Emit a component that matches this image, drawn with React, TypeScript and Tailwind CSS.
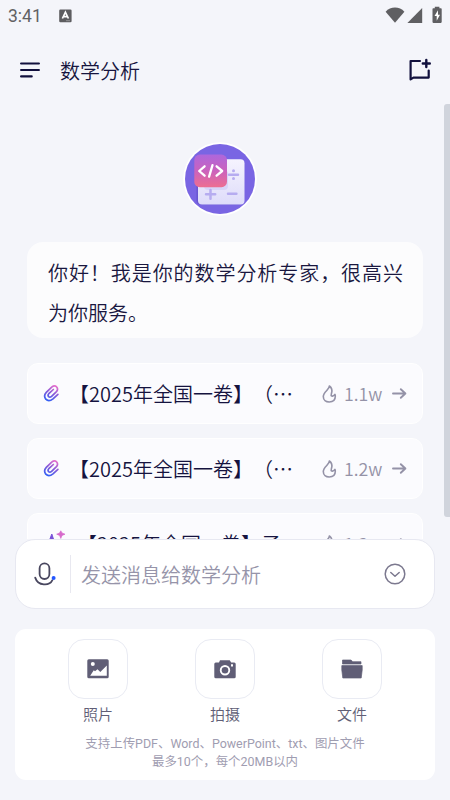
import React from "react";

const CJK = "font-['Noto_Sans_CJK_SC',sans-serif]";

function StatusBar() {
  return (
    <div className="flex h-8 shrink-0 items-center pl-2 font-['Roboto','Noto_Sans_CJK_SC',sans-serif] text-[17.5px] font-normal text-[#616163]">
      <span className="w-[51px] leading-8">3:41</span>
      <svg width="13" height="14" viewBox="0 0 13 14">
        <rect x="0.2" y="0.5" width="12.4" height="12.8" rx="1.2" fill="#5d5d60" />
        <path d="M3.4 9.5 6.4 3.2 9.4 9.5M4.6 7.6h3.6" fill="none" stroke="#fff" strokeWidth="1.7" />
        <path d="M7 11.7h4" stroke="#aaa" strokeWidth="0.7" />
      </svg>
      <svg className="ml-auto" width="65" height="20" viewBox="385 5.5 65 20" fill="#5f5f62">
        <path d="M385.6 11.2C390.5 5.7 399.5 5.7 404.4 11.2L395 22.2Z" />
        <path d="M422.2 7.5V22.4H407.4Z" />
        <path d="M434.8 6.2h4.6v1.6h1.5q.8 0 .8.8v13q0 .8-.8.8h-7.6q-.8 0-.8-.8v-13q0-.8.8-.8h1.5Z" />
        <path d="M438 9.8l-3.5 5.8h2.2v4.6l3.3-6h-2Z" fill="#fff" />
      </svg>
    </div>
  );
}

function Header() {
  return (
    <header className="flex h-[76px] shrink-0 items-center pr-[18px] pl-5">
      <svg width="20" height="16" viewBox="0 0 20 16" stroke="#11103d" strokeWidth="2.2" strokeLinecap="round">
        <path d="M1.1 1.5h17.8M1.1 8h17.8M1.1 14.4h10.6" />
      </svg>
      <h1 className="mt-px ml-5 text-[20px] leading-8 font-[350] text-[#17153f]">数学分析</h1>
      <svg className="ml-auto" width="24" height="24" viewBox="408 58 24 24" fill="none" stroke="#11103d" strokeWidth="2.2" strokeLinecap="round" strokeLinejoin="round">
        <path d="M420 61H410.6V79.4L413.4 77.6H428.7V70.6" />
        <path d="M426.3 60v7M422.8 63.5h7" strokeWidth="2.4" />
      </svg>
    </header>
  );
}

function Avatar() {
  return (
    <svg className="ml-[156px] block shrink-0" width="74" height="74" viewBox="183 142 74 74">
      <defs>
        <linearGradient id="badge" x1="0" y1="0" x2="0" y2="1">
          <stop offset="0" stopColor="#ad67dc" />
          <stop offset="0.5" stopColor="#cb62bd" />
          <stop offset="1" stopColor="#ed6e91" />
        </linearGradient>
        <linearGradient id="pad" x1="0" y1="0" x2="0" y2="1">
          <stop offset="0" stopColor="#f5f3fe" />
          <stop offset="1" stopColor="#dedcfa" />
        </linearGradient>
      </defs>
      <circle cx="220" cy="179" r="36.8" fill="#fff" />
      <circle cx="220" cy="179" r="35" fill="#7965e3" />
      <rect x="196.5" y="160" width="46" height="44.5" rx="4" fill="#6957d1" />
      <rect x="198" y="159.3" width="46.5" height="45.2" rx="4" fill="url(#pad)" />
      <rect x="204" y="170" width="24" height="20" rx="4" fill="#d8d4f8" />
      <g stroke="#b6acf0" strokeWidth="2.5" strokeLinecap="round">
        <path d="M229 174.7h9M228 193.8h8.4M206 194.3h9.2M210.5 190v8.8" />
      </g>
      <circle cx="233.5" cy="170.8" r="1.5" fill="#b6acf0" />
      <circle cx="233.5" cy="178.6" r="1.5" fill="#b6acf0" />
      <rect x="194.3" y="154.6" width="32.7" height="32.6" rx="5.5" fill="url(#badge)" />
      <path d="M204.6 166.3 199.2 171l5.4 4.7M216.6 166.3 222.2 171l-5.6 4.7M212.5 165.2l-3.4 11.4" fill="none" stroke="#fff" strokeWidth="2.3" strokeLinecap="round" strokeLinejoin="round" />
    </svg>
  );
}

function ClipIcon() {
  return (
    <svg className="shrink-0" width="17" height="19" viewBox="43 384 17 19" fill="none">
      <defs>
        <linearGradient id="clip" gradientUnits="userSpaceOnUse" x1="55" y1="385" x2="48" y2="401">
          <stop offset="0" stopColor="#ec70cb" />
          <stop offset="0.5" stopColor="#8458d8" />
          <stop offset="1" stopColor="#3160f5" />
        </linearGradient>
      </defs>
      <path d="M57.9 394.3 53 398.8Q48.8 402.2 45.8 399.2 43.2 395.8 46.3 392.4L51.7 387.2Q54.6 384.8 56.7 387 58.6 389.4 56.2 391.9L51.6 396.4Q49.9 397.8 48.6 396.6 47.4 395.3 48.8 393.7L53.3 389.5" stroke="url(#clip)" strokeWidth="1.7" strokeLinecap="round" />
    </svg>
  );
}

function SparkIcon() {
  return (
    <svg className="shrink-0" width="25" height="28" viewBox="43 530 25 28">
      <path d="M51.8 534 54.3 541.5 60 544.5 54.3 547 51.8 554 49 547 43.5 544.5 49 541.5Z" fill="#7952d8" stroke="#7952d8" />
      <path d="M60.8 530.8 62 533 65 534.2 62 535.4 60.8 538.4 59.6 535.4 56.7 534.2 59.6 533Z" fill="#d76acb" stroke="#d76acb" strokeWidth="0.7" />
    </svg>
  );
}

function Prompt({ icon, title, count }: { icon: React.ReactNode; title: string; count: string }) {
  return (
    <div className="flex h-[61px] shrink-0 items-center rounded-[11px] border border-white bg-[#fbfbfe] pr-[15px] pl-[15px]">
      {icon}
      <span className="ml-[9px] whitespace-nowrap text-[20px] leading-[30px] text-[#15133f]">{title}</span>
      <svg className="ml-auto shrink-0" width="16" height="20" viewBox="0 0 16 20" fill="none" stroke="#9492a7" strokeWidth="1.6" strokeLinejoin="round" strokeLinecap="round">
        <path d="M7.4 2C7.6 5.4 1.3 7.8 1.3 12.6 1.3 16 4 18 7.2 18 10.9 18 13.3 15.8 13.3 12.3 13.3 11.6 13.2 11 12.9 10.4 12.2 11.4 10.9 12.4 9.8 12 8.5 11.4 9.2 10.4 9.6 9.1 10.3 6.5 9.6 3.6 7.4 2Z" />
      </svg>
      <span className="mb-[2px] ml-[6px] w-[40px] whitespace-nowrap text-[17.8px] leading-[30px] text-[#9492a7]">{count}</span>
      <svg className="ml-2 shrink-0" width="15" height="14" viewBox="0 0 15 14" fill="none" stroke="#9492a7" strokeWidth="1.9" strokeLinecap="round" strokeLinejoin="round">
        <path d="M1 6.5h12.4M8.8 2.2 13.4 6.5l-4.6 4.3" />
      </svg>
    </div>
  );
}

function Composer() {
  return (
    <div className="mx-[15px] flex h-[70px] shrink-0 items-center rounded-[20px] border border-[#e7e8f1] bg-white pr-[28px] pl-[18px]">
      <svg width="23" height="26" viewBox="34 561 23 26" fill="none" stroke="#49475f" strokeWidth="1.8" strokeLinecap="round">
        <rect x="39.6" y="563.4" width="9.8" height="15.6" rx="4.9" />
        <path d="M35.2 577.6C38 586.3 49.5 586.2 52.4 580.2" />
        <circle cx="53.6" cy="578" r="2" fill="#2356ff" stroke="none" />
      </svg>
      <div className="ml-[13px] h-[38px] w-px bg-[#e8e8f0]" />
      <span className="mt-px ml-[10px] text-[20px] leading-[30px] text-[#9694a9]">发送消息给数学分析</span>
      <svg className="ml-auto" width="22" height="22" viewBox="0 0 22 22" fill="none" stroke="#7c798f" strokeWidth="1.5" strokeLinecap="round" strokeLinejoin="round">
        <circle cx="11" cy="11" r="9.8" />
        <path d="M6.8 9.5 11 13.3l4.2-3.8" />
      </svg>
    </div>
  );
}

function Attach({ label, children }: { label: string; children: React.ReactNode }) {
  return (
    <div className="flex w-[60px] flex-col items-center">
      <div className="flex h-[60px] w-[60px] items-center justify-center rounded-2xl border border-[#e9ebf3] bg-white">
        <svg width="24" height="24" viewBox="0 0 24 24" fill="#605e76">{children}</svg>
      </div>
      <span className="mt-[3px] text-[15px] leading-6 text-[#605e76]">{label}</span>
    </div>
  );
}

export default function App() {
  return (
    <div lang="zh-CN" className={`flex h-[800px] w-[450px] flex-col overflow-hidden bg-[#f4f5fa] font-[350] [text-spacing-trim:space-all] ${CJK}`}>
      <StatusBar />
      <Header />
      <main className="relative -mt-1 flex h-[435px] shrink-0 flex-col overflow-hidden px-[27px] pt-[38px]">
        <Avatar />
        <p className="mt-[26px] h-[96px] shrink-0 rounded-[16px] bg-[#fcfcfd] pt-[11px] pr-5 pl-[21px] text-justify text-[20px] leading-10 text-[#19173f]">
          你好！我是你的数学分析专家，很高兴为你服务。
        </p>
        <div className="mt-[25px] flex flex-col gap-[14px]">
          <Prompt icon={<ClipIcon />} title="【2025年全国一卷】（…" count="1.1w" />
          <Prompt icon={<ClipIcon />} title="【2025年全国一卷】（…" count="1.2w" />
          <Prompt icon={<SparkIcon />} title="【2025年全国一卷】子…" count="1.2w" />
        </div>
        <div className="absolute top-0 right-0 h-[413px] w-[6px] rounded-l-[3px] bg-[#d0d4dc]" />
      </main>
      <Composer />
      <section className="mx-[15px] mt-5 h-[151px] shrink-0 rounded-[11px] bg-white pt-[10px]">
        <div className="flex justify-between px-[53px]">
          <Attach label="照片">
            <path fillRule="evenodd" d="M2.8 2.3H21.2Q22.7 2.3 22.7 3.8V19.8Q22.7 21.3 21.2 21.3H2.8Q1.3 21.3 1.3 19.8V3.8Q1.3 2.3 2.8 2.3ZM6.8 5A2 2 0 1 0 6.8 9 2 2 0 1 0 6.8 5ZM4.2 18.8H20.8V8.5L14.3 15 11.5 12.2 9 14.3 7.8 13.3Z" />
          </Attach>
          <Attach label="拍摄">
            <path fillRule="evenodd" d="M7 3.3H16.7L18.2 5.5H21.2Q22.7 5.5 22.7 7V19.8Q22.7 21.3 21.2 21.3H2.8Q1.3 21.3 1.3 19.8V7Q1.3 5.5 2.8 5.5H6ZM12 8A5.2 5.2 0 1 0 12 18.4 5.2 5.2 0 1 0 12 8ZM18 7.2V9.5H20V7.2Z" />
            <circle cx="12" cy="13.2" r="3.3" />
          </Attach>
          <Attach label="文件">
            <path d="M2.5 3H11L12.8 4.7H21V7H2.5ZM1.8 8.6H22.2V13L21.2 21H2.8L1.8 13Z" stroke="#605e76" strokeWidth="0.7" strokeLinejoin="round" />
          </Attach>
        </div>
        <p className="mt-[9px] text-center font-['Roboto','Noto_Sans_CJK_SC',sans-serif] text-[12.45px] leading-[18px] font-normal text-[#9f9db1]">
          支持上传PDF、Word、PowerPoint、txt、图片文件
          <br />
          最多10个，每个20MB以内
        </p>
      </section>
    </div>
  );
}
